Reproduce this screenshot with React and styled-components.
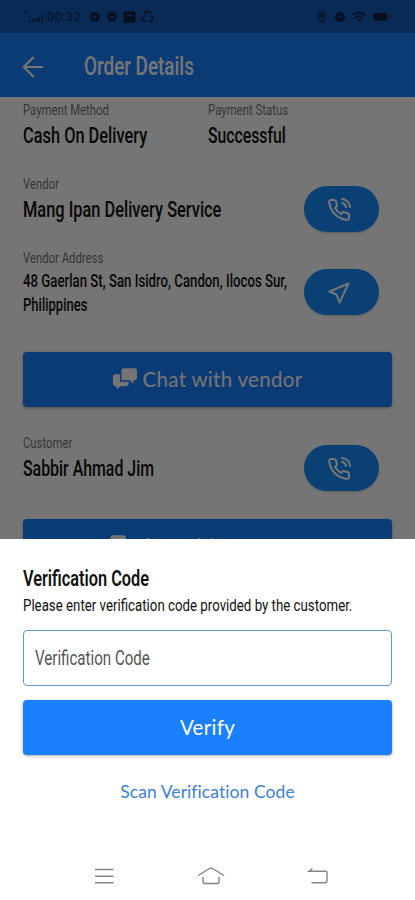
import React from "react";
import styled, { createGlobalStyle } from "styled-components";
import { FiArrowLeft, FiPhoneCall } from "react-icons/fi";

const GlobalStyle = createGlobalStyle`
  * {
    box-sizing: border-box;
  }
  body {
    margin: 0;
    background: #fff;
  }
`;

const Screen = styled.div`
  position: relative;
  width: 415px;
  height: 900px;
  overflow: hidden;
  background: #fff;
  font-family: Roboto, "Liberation Sans", sans-serif;
`;

const StatusBar = styled.div`
  display: flex;
  align-items: center;
  justify-content: space-between;
  height: 33px;
  padding: 0 24px 0 23px;
  background: #145cb8;
  color: #10244a;
`;

const StatusGroup = styled.div`
  display: flex;
  align-items: center;
  gap: ${(props) => props.$gap}px;
`;

const Clock = styled.span`
  font-size: 12.5px;
  letter-spacing: 0.6px;
  margin: 0 3px 0 -3px;
`;

const AppBar = styled.header`
  display: flex;
  align-items: center;
  height: 64px;
  padding: 3px 17px 0;
  gap: 35px;
  background: #1a80ff;
  color: #fff;
`;

/* condensed lettering: regular glyphs drawn narrower */
const Text = styled.span`
  display: block;
  width: max-content;
  height: ${(props) => props.$line}px;
  font-size: ${(props) => props.$size}px;
  line-height: ${(props) => props.$line}px;
  font-weight: ${(props) => props.$weight || 400};
  color: ${(props) => props.$color || "#111"};
  white-space: nowrap;
  transform: scaleX(${(props) => props.$squeeze});
  transform-origin: left center;
`;

const Content = styled.main`
  padding: 2px 23px 0;
`;

const Row = styled.div`
  display: flex;
  align-items: flex-start;
  height: ${(props) => props.$height}px;
`;

const Cell = styled.div`
  flex: 1;
  min-width: 0;
`;

const Pill = styled.button`
  display: flex;
  flex: none;
  align-items: center;
  justify-content: center;
  width: 75px;
  height: 46px;
  margin: ${(props) => props.$top}px 13px 0 0;
  padding: 1px 5px 0 0;
  border: none;
  border-radius: 23px;
  background: #1a8cff;
  box-shadow: 0 1px 2px rgba(0, 0, 0, 0.2);
  color: #fff;
`;

const Button = styled.button`
  display: flex;
  flex: none;
  align-items: center;
  justify-content: center;
  gap: 6px;
  width: 100%;
  height: 55px;
  padding: 0 0 2px;
  border: none;
  border-radius: 4px;
  background: #1a80ff;
  box-shadow: 0 1px 3px rgba(0, 0, 0, 0.35);
  color: #fff;
  font: 400 20.5px Lato, sans-serif;
  letter-spacing: 0.3px;
`;

const ChatButton = styled(Button)`
  margin-bottom: ${(props) => props.$after || 0}px;
`;

const Scrim = styled.div`
  position: absolute;
  inset: 0;
  background: rgba(0, 0, 0, 0.54);
`;

const Sheet = styled.section`
  position: absolute;
  left: 0;
  right: 0;
  bottom: 0;
  display: flex;
  flex-direction: column;
  height: 361px;
  padding: 27px 23px 0;
  background: #fff;
`;

const Field = styled.div`
  display: flex;
  align-items: center;
  height: 56px;
  margin: 12px 0 14px;
  padding-left: 11px;
  border: 1px solid #6198d8;
  border-radius: 4px;
`;

const LinkButton = styled.button`
  margin-top: 24px;
  padding: 0;
  border: none;
  background: none;
  color: #3c82d6;
  font: 400 17.5px/26px Lato, sans-serif;
  letter-spacing: 0.08px;
`;

const NavBar = styled.nav`
  display: flex;
  align-items: center;
  gap: 79px;
  height: 24px;
  margin: auto 0 12px 70px;
  color: #858585;
`;

const Label = ({ children, squeeze }) => (
  <Text $size={15.5} $line={22} $color="#777" $squeeze={squeeze}>
    {children}
  </Text>
);

const Value = ({ children, squeeze }) => (
  <Text $size={22.5} $line={28} $weight={500} $squeeze={squeeze}>
    {children}
  </Text>
);

const ChatIcon = () => (
  <svg width="24" height="24" viewBox="0 0 20 20" fill="currentColor">
    <path d="M5.8 12.2V6H2C.9 6 0 6.9 0 8v6c0 1.1.9 2 2 2h1v3l3-3h5c1.1 0 2-.9 2-2v-1.82a.943.943 0 0 1-.2.021h-7z" />
    <path d="M18 1H9c-1.1 0-2 .9-2 2v8h7l3 3v-3h1c1.1 0 2-.899 2-2V3c0-1.1-.9-2-2-2z" />
  </svg>
);

const DirectionIcon = () => (
  <svg
    width="24"
    height="24"
    viewBox="0 0 24 24"
    fill="none"
    stroke="currentColor"
    strokeWidth="2"
    strokeLinejoin="round"
  >
    <path d="M21.500 2.500L2.500 10.500L9.500 13.500L12.500 21.500z" />
  </svg>
);

const SignalIcon = () => (
  <svg width="22" height="14" viewBox="0 0 22 14" fill="none" stroke="currentColor">
    <path d="M1 2h4M3 2v3M5 6l2 2" />
    <path d="M7 12v-2M10 12v-3M13 12V8M16 12V7M19 12V5" strokeWidth="1.6" />
  </svg>
);

const RoundIcon = () => (
  <svg width="12" height="12" viewBox="0 0 12 12">
    <circle cx="6" cy="6" r="5" fill="currentColor" />
    <path d="M4 6h4M6 4.5v3" stroke="#145cb8" />
  </svg>
);

const SquareIcon = () => (
  <svg width="13" height="12" viewBox="0 0 13 12">
    <rect x="0.5" width="12" height="12" rx="2.5" fill="currentColor" />
    <path d="M4 4.5h5" stroke="#145cb8" />
  </svg>
);

const SyncIcon = () => (
  <svg width="13" height="13" viewBox="0 0 13 13" fill="none" stroke="currentColor" strokeWidth="1.5">
    <path d="M3 4.5l2-3h3l1.5 2.5M11 6l1 2.5-1.5 2.5H8M5.5 11H2.5L1 8.5l1.5-2" />
  </svg>
);

const PinIcon = () => (
  <svg width="12" height="12" viewBox="0 0 12 13" fill="none" stroke="currentColor" strokeWidth="1.5">
    <path d="M6 12C3 9 1.5 7.3 1.5 5a4.5 4.5 0 0 1 9 0c0 2.3-1.5 4-4.5 7z" />
    <circle cx="6" cy="5" r="1.5" />
  </svg>
);

const WifiIcon = () => (
  <svg width="14" height="12" viewBox="0 0 14 12" fill="none" stroke="currentColor" strokeWidth="1.9">
    <path d="M1 4q6-5 12 0M3 7q4-3 8 0M5.5 9.5q1.5-1 3 0" />
  </svg>
);

const BatteryIcon = () => (
  <svg width="19" height="10" viewBox="0 0 19 10">
    <rect x="1" y="1" width="14" height="8" rx="2" fill="currentColor" />
    <path d="M18 3v4" stroke="currentColor" />
  </svg>
);

const MenuIcon = () => (
  <svg width="24" height="24" viewBox="0 0 24 24" fill="none" stroke="currentColor" strokeWidth="1.4">
    <path d="M2 5.500h18.500M2 12.200h18.500M2 18.800h18.500" />
  </svg>
);

const HomeIcon = () => (
  <svg width="30" height="24" viewBox="0 0 30 24" fill="none" stroke="currentColor" strokeWidth="1.4">
    <path d="M2 11.500L13.500 4.500q1.500-1 3 0L28 11.500M7 13v5q0 1.500 1.500 1.500h13q1.500 0 1.500-1.500v-5" />
  </svg>
);

const BackIcon = () => (
  <svg width="24" height="24" viewBox="0 0 24 24" fill="none" stroke="currentColor" strokeWidth="1.4">
    <path d="M7.500 4.500L4 7.200h16.500q1.500 0 1.500 1.500v8.500q0 1.500-1.500 1.500H6.500" />
  </svg>
);

const App = () => {
  return (
    <>
      <GlobalStyle />
      <Screen>
        <StatusBar>
          <StatusGroup $gap={5}>
            <SignalIcon />
            <Clock>00:32</Clock>
            <RoundIcon />
            <RoundIcon />
            <SquareIcon />
            <SyncIcon />
          </StatusGroup>
          <StatusGroup $gap={6}>
            <PinIcon />
            <RoundIcon />
            <WifiIcon />
            <BatteryIcon />
          </StatusGroup>
        </StatusBar>
        <AppBar>
          <FiArrowLeft size={32} strokeWidth={1.6} />
          <Text $size={25} $line={34} $weight={500} $color="#fff" $squeeze={0.755}>
            Order Details
          </Text>
        </AppBar>

        <Content>
          <Row $height={74}>
            <Cell>
              <Label squeeze={0.73}>Payment Method</Label>
              <Value squeeze={0.728}>Cash On Delivery</Value>
            </Cell>
            <Cell>
              <Label squeeze={0.735}>Payment Status</Label>
              <Value squeeze={0.7}>Successful</Value>
            </Cell>
          </Row>
          <Row $height={74}>
            <Cell>
              <Label squeeze={0.73}>Vendor</Label>
              <Value squeeze={0.728}>Mang Ipan Delivery Service</Value>
            </Cell>
            <Pill $top={13}>
              <FiPhoneCall size={24} strokeWidth={2.1} />
            </Pill>
          </Row>
          <Row $height={105}>
            <Cell>
              <Label squeeze={0.73}>Vendor Address</Label>
              <Text $size={17.5} $line={24} $weight={500} $squeeze={0.755}>
                48 Gaerlan St, San Isidro, Candon, Ilocos Sur,
              </Text>
              <Text $size={17.5} $line={24} $weight={500} $squeeze={0.745}>
                Philippines
              </Text>
            </Cell>
            <Pill $top={22}>
              <DirectionIcon />
            </Pill>
          </Row>
          <ChatButton $after={25}>
            <ChatIcon />
            Chat with vendor
          </ChatButton>
          <Row $height={87}>
            <Cell>
              <Label squeeze={0.73}>Customer</Label>
              <Value squeeze={0.706}>Sabbir Ahmad Jim</Value>
            </Cell>
            <Pill $top={13}>
              <FiPhoneCall size={24} strokeWidth={2.1} />
            </Pill>
          </Row>
          <ChatButton>
            <ChatIcon />
            Chat with customer
          </ChatButton>
        </Content>

        <Scrim />

        <Sheet>
          <Text $size={21.5} $line={26} $weight={600} $squeeze={0.758}>
            Verification Code
          </Text>
          <Text $size={17} $line={26} $squeeze={0.781}>
            Please enter verification code provided by the customer.
          </Text>
          <Field>
            <Text $size={20} $line={28} $color="#555" $squeeze={0.755}>
              Verification Code
            </Text>
          </Field>
          <Button>Verify</Button>
          <LinkButton>Scan Verification Code</LinkButton>
          <NavBar>
            <MenuIcon />
            <HomeIcon />
            <BackIcon />
          </NavBar>
        </Sheet>
      </Screen>
    </>
  );
};

export default App;
